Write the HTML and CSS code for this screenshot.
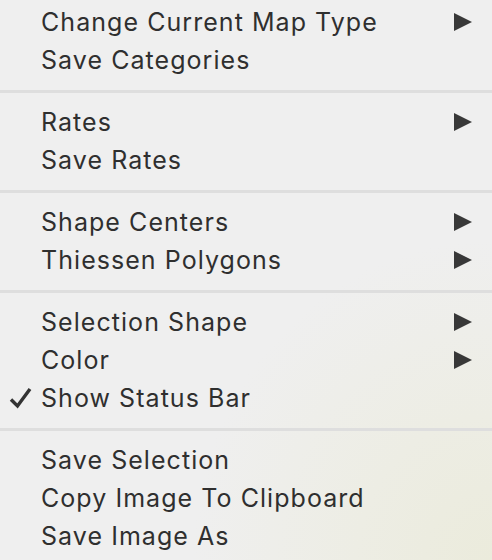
FILE: index.html
```html
<!DOCTYPE html>
<html>
<head>
<meta charset="utf-8">
<link rel="stylesheet" href="styles.css">
</head>
<body>
<div class="menu">
  <div class="item"><span class="check"></span><span class="label">Change Current Map Type</span><span class="arrow"></span></div>
  <div class="item"><span class="check"></span><span class="label">Save Categories</span></div>
  <div class="sep"></div>
  <div class="item"><span class="check"></span><span class="label">Rates</span><span class="arrow"></span></div>
  <div class="item"><span class="check"></span><span class="label">Save Rates</span></div>
  <div class="sep"></div>
  <div class="item"><span class="check"></span><span class="label">Shape Centers</span><span class="arrow"></span></div>
  <div class="item"><span class="check"></span><span class="label">Thiessen Polygons</span><span class="arrow"></span></div>
  <div class="sep"></div>
  <div class="item"><span class="check"></span><span class="label">Selection Shape</span><span class="arrow"></span></div>
  <div class="item"><span class="check"></span><span class="label">Color</span><span class="arrow"></span></div>
  <div class="item"><span class="check"><svg width="24" height="24" viewBox="0 0 24 24"><polyline points="2,13.5 8.5,20 21,3" fill="none" stroke="#333" stroke-width="3.4" stroke-linecap="butt" stroke-linejoin="miter"/></svg></span><span class="label">Show Status Bar</span></div>
  <div class="sep"></div>
  <div class="item"><span class="check"></span><span class="label">Save Selection</span></div>
  <div class="item"><span class="check"></span><span class="label">Copy Image To Clipboard</span></div>
  <div class="item"><span class="check"></span><span class="label">Save Image As</span></div>
</div>
</body>
</html>
```

FILE: styles.css
```css
html, body {
  margin: 0;
  padding: 0;
  height: 100%;
}
body {
  background-color: #efefef;
  background-image: radial-gradient(ellipse 300px 320px at 100% 100%, #ebebdc 0%, #edede4 45%, #efefef 100%);
  font-family: Inter, "Liberation Sans", Arial, sans-serif;
  color: #2f2f2f;
  overflow: hidden;
}
.menu {
  padding-top: 3px;
  display: flex;
  flex-direction: column;
}
.item {
  display: grid;
  grid-template-columns: 41px 1fr 18px;
  align-items: center;
  height: 38px;
  padding-right: 20px;
  font-size: 25px;
  letter-spacing: 1.05px;
  line-height: 38px;
}
.check {
  display: flex;
  align-items: center;
  padding-left: 9px;
  height: 38px;
}
.label {
  grid-column: 2;
  white-space: nowrap;
}
.arrow {
  grid-column: 3;
  width: 0;
  height: 0;
  border-top: 9.5px solid transparent;
  border-bottom: 9.5px solid transparent;
  border-left: 18px solid #383838;
}
.sep {
  height: 24px;
  display: flex;
  align-items: center;
}
.sep::before {
  content: "";
  display: block;
  width: 100%;
  height: 3px;
  background: #dedede;
}
```
